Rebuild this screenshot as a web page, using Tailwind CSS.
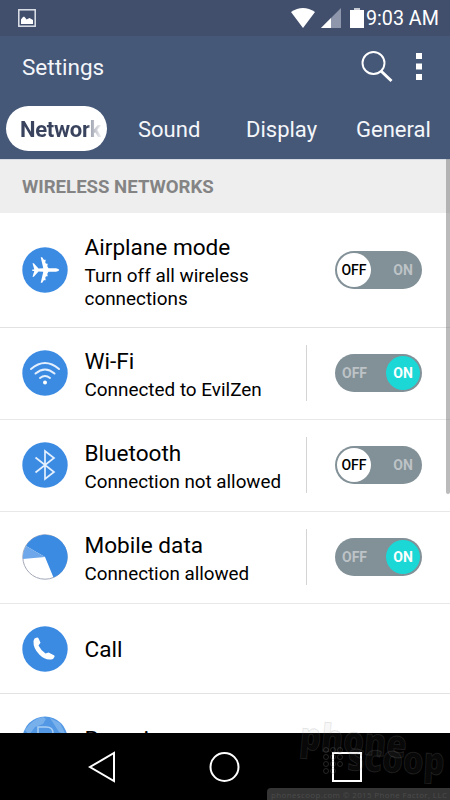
<!DOCTYPE html>
<html lang="en">
<head>
<meta charset="utf-8">
<title>Settings</title>
<script src="https://cdn.jsdelivr.net/npm/@tailwindcss/browser@4"></script>
</head>
<body class="w-[450px] h-[800px] overflow-hidden bg-white font-[Roboto,sans-serif] text-black">
<div class="relative flex h-[800px] w-[450px] flex-col overflow-hidden">
  <div class="flex h-9 shrink-0 items-center bg-[#414f6c] pl-[18px] pr-[9px] text-white">
    <svg class="h-[18px] w-[18px]" viewBox="0 0 18 18"><rect x=".8" y=".8" width="16.4" height="16.4" fill="none" stroke="#dfe3ea" stroke-width="1.5"/><path d="M3 15V10.500l1.500-2 1.500-1 1.500 1.500 1 1.500 3-1.500 3.500 2V15z" fill="#fff"/></svg>
    <svg class="ml-auto h-[20px] w-[24px]" viewBox="0 0 24 20"><path d="M0 4Q12-4 24 4L12 20z" fill="#fff"/></svg>
    <svg class="ml-[6px] h-[20px] w-[20px]" viewBox="0 0 20 20"><path d="M20 0v20H0z" fill="#8d96aa"/><path d="M10 10v10H0z" fill="#fff"/></svg>
    <svg class="ml-[9px] h-[20px] w-[14px]" viewBox="0 0 14 20"><path d="M4 0h6v2H4z" fill="#c5cad3"/><path d="M0 2h14v18H0z" fill="#fff"/></svg>
    <span class="ml-[2px] w-[75px] whitespace-nowrap pt-px text-[19.7px] leading-9">9:03 AM</span>
  </div>
  <header class="h-[123px] shrink-0 bg-[#465878] text-[#f4f6fa]">
    <div class="flex h-[62px] items-center pl-[22px] pr-[28px]">
      <h1 class="pt-[2px] text-[22.500px]">Settings</h1>
      <svg class="ml-auto h-8 w-8" viewBox="0 0 32 32" fill="none" stroke="#fff"><circle cx="12.500" cy="12" r="11" stroke-width="1.900"/><path d="M20 20l10.500 10" stroke-width="3"/></svg>
      <svg class="ml-[23px] h-[28px] w-[6px]" viewBox="0 0 6 28" fill="#fff"><path d="M0 0h6v6H0zM0 10.500h6v6H0zM0 21h6v6H0z"/></svg>
    </div>
    <nav class="flex h-[61px] items-start pl-[6px] pt-[8px] text-[22px] leading-[47px]">
      <div class="h-[45px] w-[101px] overflow-hidden rounded-full bg-white pl-[14px] font-bold tracking-[-.3px]"><span class="block w-[81px] overflow-hidden bg-linear-to-r from-[#39435d] from-84% via-[#9a9fac] via-86% to-[#f0f0f2] to-100% bg-clip-text text-transparent">Network</span></div>
      <span class="ml-[31px] w-[108px]">Sound</span><span class="w-[110px]">Display</span><span>General</span>
    </nav>
  </header>
  <main class="relative flex min-h-0 flex-1 flex-col overflow-hidden">
    <h2 class="h-[54px] shrink-0 border-t border-[#d5dae3] bg-[#eee] pl-[22px] text-[18.600px] font-bold leading-[55px] text-[#848484]">WIRELESS NETWORKS</h2>
    <section class="flex h-[115px] shrink-0 items-center border-b border-[#e2e2e2] pl-[22px]">
      <svg class="h-[46px] w-[46px]" viewBox="0 0 46 46"><circle cx="23" cy="23" r="22.700" fill="#3c8be3"/><g transform="translate(-.5 0)"><path d="M11 16.300h1.300L17 21.500l4.800-.3-2.600-11h1.500l1.800 2.800 1.300-.4.500 1.700-.8.500 1 2 1.300-.2.500 1.700-.8.400 1.500 2.500h7.500Q37.700 21.700 37.700 23T34.500 24.800h-7.500l-1.500 2.500.8.400-.5 1.700-1.300-.2-1 2 .8.500-.5 1.700-1.300-.4-1.800 2.800h-1.500l2.600-11-4.800-.3-4.700 5.200H11l1.800-5.700h-2v-1.600h2z" fill="#fff"/></g></svg>
      <div class="ml-[16.500px] mt-[3px] w-[219.500px]"><p class="text-[22.600px] leading-[29px]">Airplane mode</p><p class="pt-[2px] text-[18.900px] leading-[23px]">Turn off all wireless connections</p></div>
      <div class="ml-[31px] flex h-[38px] w-[87px] items-center justify-between rounded-full bg-[#829097] p-[2px] text-[14px] font-bold"><span class="h-[34px] w-[34px] rounded-full bg-white text-center font-medium leading-[34px]">OFF</span><span class="w-[34px] text-center text-[#bdc3c6]">ON</span></div>
    </section>
    <section class="flex h-[92px] shrink-0 items-center border-b border-[#e8e8e8] pb-[2px] pl-[22px]">
      <svg class="h-[46px] w-[46px]" viewBox="0 0 46 46"><circle cx="23" cy="23" r="22.700" fill="#3c8be3"/><g fill="none" stroke="#e4f0fd" stroke-width="2" stroke-linecap="round"><path d="M9 19Q23 7 37 19M13.500 23.500Q23 15.500 32.500 23.500M18 28Q23 24 28 28"/></g><circle cx="23" cy="32.500" r="2" fill="#fff"/></svg>
      <div class="ml-[16.500px] mt-[4px] w-[221.500px]"><p class="text-[22.600px] leading-[30px]">Wi-Fi</p><p class="text-[18.900px] leading-[26px]">Connected to EvilZen</p></div>
      <i class="h-[56px] w-px bg-[#d4d4d4]"></i>
      <div class="ml-[28px] flex h-[38px] w-[87px] items-center justify-between rounded-full bg-[#829097] p-[2px] text-[14px] font-bold"><span class="w-[35px] text-center leading-[34px] text-[#bdc3c6]">OFF</span><span class="h-[34px] w-[34px] rounded-full bg-[#1bd8d6] text-center leading-[34px] text-white">ON</span></div>
    </section>
    <section class="flex h-[92px] shrink-0 items-center border-b border-[#e8e8e8] pb-[2px] pl-[22px]">
      <svg class="h-[46px] w-[46px]" viewBox="0 0 46 46"><circle cx="23" cy="23" r="22.700" fill="#3c8be3"/><path d="M13.500 15.500L32 30l-9 7V9l9 7-18.500 14.500" fill="none" stroke="#e4f0fd" stroke-width="1.700"/></svg>
      <div class="ml-[16.500px] mt-[4px] w-[221.500px]"><p class="text-[22.600px] leading-[30px]">Bluetooth</p><p class="text-[18.800px] leading-[26px]">Connection not allowed</p></div>
      <i class="h-[56px] w-px bg-[#d4d4d4]"></i>
      <div class="ml-[28px] flex h-[38px] w-[87px] items-center justify-between rounded-full bg-[#829097] p-[2px] text-[14px] font-bold"><span class="h-[34px] w-[34px] rounded-full bg-white text-center font-medium leading-[34px]">OFF</span><span class="w-[34px] text-center leading-[34px] text-[#bdc3c6]">ON</span></div>
    </section>
    <section class="flex h-[92px] shrink-0 items-center border-b border-[#e8e8e8] pb-[2px] pl-[22px]">
      <svg class="h-[46px] w-[46px]" viewBox="0 0 46 46"><circle cx="23" cy="23" r="22.200" fill="#fff" stroke="#a3a8b8"/><path d="M23 23L4 12A22.200 22.200 0 1 1 31.500 43.500z" fill="#3c8be3"/><path d="M23 23L4 12A22.200 22.200 0 0 0 .9 25z" fill="#6ea8ea"/></svg>
      <div class="ml-[16.500px] mt-[4px] w-[221.500px]"><p class="text-[22.600px] leading-[30px]">Mobile data</p><p class="text-[18.800px] leading-[26px]">Connection allowed</p></div>
      <i class="h-[56px] w-px bg-[#d4d4d4]"></i>
      <div class="ml-[28px] flex h-[38px] w-[87px] items-center justify-between rounded-full bg-[#829097] p-[2px] text-[14px] font-bold"><span class="w-[35px] text-center leading-[34px] text-[#bdc3c6]">OFF</span><span class="h-[34px] w-[34px] rounded-full bg-[#1bd8d6] text-center leading-[34px] text-white">ON</span></div>
    </section>
    <section class="flex h-[90px] shrink-0 items-center border-b border-[#e2e2e2] pl-[22px]">
      <svg class="h-[46px] w-[46px]" viewBox="0 0 46 46"><circle cx="23" cy="23" r="22.700" fill="#3c8be3"/><path d="M12.500 12.500l2.500-1q1.300 0 1.700 1.200l1.800 4-2 2.800q2.500 5 7 8l3-1 5.500 2.800q1 .7.400 1.700l-1.400 2q-7 2.300-13.500-4.200T11.500 15z" fill="#fff"/></svg>
      <p class="ml-[16.500px] pt-[2px] text-[22.600px]">Call</p>
    </section>
    <section class="flex h-[92px] shrink-0 items-center pl-[22px]">
      <svg class="mt-[-2px] h-[46px] w-[46px]" viewBox="0 0 46 46"><circle cx="23" cy="23" r="22.500" fill="#5298e5"/><path d="M3 14Q10 3 21 1l3 2-3 5-8 3-6 8zM28 2l10 5 6 12-7-3z" fill="#78b0ec"/><path d="M16 30V11h8q7 0 7 6t-7 6h-5" fill="none" stroke="#a9cff5" stroke-width="1.500"/></svg>
      <p class="ml-[16.500px] text-[22.600px]">Roaming</p>
    </section>
    <div class="absolute right-0 top-0 h-[335px] w-[4px] rounded-b-full bg-[#777]/50"></div>
  </main>
  <footer class="flex h-[67px] shrink-0 items-center bg-black pl-[87px]">
    <svg class="h-[32px] w-[30px]" viewBox="0 0 30 32"><path d="M27 2v28L3 16z" fill="none" stroke="#fff" stroke-width="2"/></svg>
    <svg class="ml-[91px] h-[32px] w-[32px]" viewBox="0 0 32 32"><circle cx="16.500" cy="16" r="14" fill="none" stroke="#fff" stroke-width="2"/></svg>
    <svg class="ml-[91px] h-[32px] w-[32px]" viewBox="0 0 32 32"><path d="M2 2h28v28H2z" fill="none" stroke="#fff" stroke-width="2"/></svg>
  </footer>
  <svg class="absolute left-0 top-[700px] h-[100px] w-[450px]" viewBox="0 700 450 100" font-family="Open Sans,sans-serif">
    <g fill="#888" fill-opacity=".07" stroke="#888" stroke-opacity=".2" font-size="38" font-weight="800"><text x="299" y="749" textLength="107" lengthAdjust="spacingAndGlyphs" transform="rotate(5 299 749)">phone</text><text x="347" y="770" textLength="97" lengthAdjust="spacingAndGlyphs" transform="rotate(3 347 770)">scoop</text></g>
    <g fill="none" stroke="#777" stroke-opacity=".3"><circle cx="326" cy="750" r="2.500"/><circle cx="333" cy="750" r="2.500"/><circle cx="340" cy="750" r="2.500"/><circle cx="326" cy="757" r="2.500"/><circle cx="333" cy="757" r="2.500"/><circle cx="340" cy="757" r="2.500"/><circle cx="326" cy="764" r="2.500"/><circle cx="333" cy="764" r="2.500"/><circle cx="340" cy="764" r="2.500"/><circle cx="326" cy="771" r="2.500"/><circle cx="333" cy="771" r="2.500"/></g>
    <path d="M267 800v-8q0-4 4-4h179v12z" fill="#353535"/>
    <text x="271" y="798" font-size="8" fill="#4c4c4c" textLength="176">phonescoop.com  © 2015 Phone Factor, LLC</text>
  </svg>
</div>
</body>
</html>
